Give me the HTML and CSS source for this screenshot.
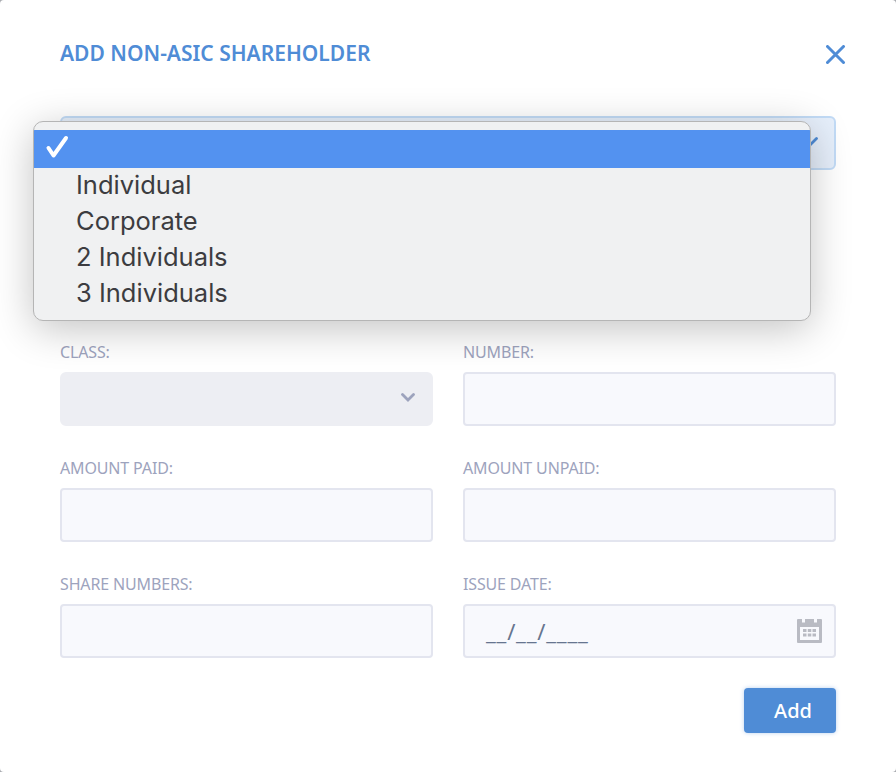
FILE: index.html
```html
<!DOCTYPE html>
<html lang="en">
<head>
<meta charset="utf-8">
<title>Add non-ASIC shareholder</title>
<link rel="stylesheet" href="styles.css">
</head>
<body>
<main class="modal">
  <header class="modal-head">
    <h1 class="modal-title">ADD NON-ASIC SHAREHOLDER</h1>
    <button class="close" type="button" aria-label="Close">
      <svg viewBox="0 0 20 20" width="20" height="20"><path d="M1.500 1.500 17.500 17.500M17.500 1.500 1.500 17.500" fill="none" stroke="#4f8cd6" stroke-width="3" stroke-linecap="round"/></svg>
    </button>
  </header>
  <div class="control select focus">
    <svg class="chev" viewBox="0 0 14 9" width="14" height="9"><path d="M1.500 1.500 7 7 12.500 1.500" fill="none" stroke="#4f8cd6" stroke-width="2.800" stroke-linecap="round"/></svg>
  </div>
  <form class="grid">
    <div class="field"><label class="label">CLASS:</label><div class="control select disabled"><svg class="chev" viewBox="0 0 14 9" width="14" height="9"><path d="M1.500 1.500 7 7 12.500 1.500" fill="none" stroke="#9da3bd" stroke-width="2.800" stroke-linecap="round"/></svg></div></div>
    <div class="field"><label class="label">NUMBER:</label><div class="control"></div></div>
    <div class="field"><label class="label">AMOUNT PAID:</label><div class="control"></div></div>
    <div class="field"><label class="label">AMOUNT UNPAID:</label><div class="control"></div></div>
    <div class="field"><label class="label">SHARE NUMBERS:</label><div class="control"></div></div>
    <div class="field"><label class="label">ISSUE DATE:</label><div class="control date"><span class="mask">__/__/____</span>
      <svg class="cal" viewBox="0 0 25 25" width="25" height="25"><path fill="#b9bbc3" fill-rule="evenodd" d="M1 1h4v3.500h3V1h9v3.500h3V1h4a1 1 0 0 1 1 1v22a1 1 0 0 1-1 1H1a1 1 0 0 1-1-1V2a1 1 0 0 1 1-1ZM3 9v13h19V9Z"/><path fill="#b9bbc3" d="M6 11h3.500v3H6ZM10.800 11h3.500v3h-3.500ZM15.500 11h3.500v3h-3.500ZM6 15.500h3.500v3H6ZM10.800 15.500h3.500v3h-3.500ZM15.500 15.500h3.500v3h-3.500Z"/></svg>
    </div></div>
  </form>
  <div class="actions"><button class="add" type="button">Add</button></div>
  <ul class="menu">
    <li class="opt selected"><svg class="tick" viewBox="0 0 24 24" width="24" height="24"><path d="M3.500 13 8.500 20.500 21 3" fill="none" stroke="#fff" stroke-width="4" stroke-linecap="round" stroke-linejoin="round"/></svg></li>
    <li class="opt">Individual</li>
    <li class="opt">Corporate</li>
    <li class="opt">2 Individuals</li>
    <li class="opt">3 Individuals</li>
  </ul>
</main>
</body>
</html>
```
FILE: styles.css
```css
html, body { margin: 0; height: 100%; }
body { background: #a9abb0; overflow: hidden; }
.modal {
  position: relative;
  box-sizing: border-box;
  height: 772px;
  padding: 41px 60px 0;
  background: #fff;
  border-radius: 4px;
  font-family: "Noto Sans", sans-serif;
}
.modal-head { display: flex; justify-content: space-between; align-items: center; height: 24px; margin-bottom: 51px; }
.modal-title { margin: 0; font-size: 21px; font-weight: 600; line-height: 24px; color: #4f8cd6; }
.close { display: flex; padding: 0; margin: 4px -10px 0 0; border: 0; background: none; }
.control {
  position: relative;
  box-sizing: border-box;
  height: 54px;
  border: 2px solid #e3e5ef;
  border-radius: 4px;
  background: #f8f9fd;
}
.select { border-radius: 6px; }
.focus { background: #e6effb; border-color: #c2dbf6; }
.disabled { background: #edeef3; border-color: #edeef3; }
.chev { position: absolute; right: 16px; top: 19px; }
.grid { display: grid; grid-template-columns: 373px 373px; column-gap: 30px; row-gap: 33px; margin-top: 173px; }
.field { display: flex; flex-direction: column; }
.label { height: 19px; margin-bottom: 10px; font-size: 16px; line-height: 19px; letter-spacing: -.15px; color: #9da3bd; }
.date { display: flex; align-items: center; justify-content: space-between; padding: 0 12px 0 21px; }
.mask { font-size: 22px; line-height: 30px; letter-spacing: .8px; color: #66758f; }
.cal { margin-bottom: 2px; }
.actions { display: flex; justify-content: flex-end; margin-top: 30px; }
.add {
  width: 92px;
  height: 45px;
  padding: 0 0 0 6px;
  border: 0;
  border-radius: 4px;
  background: #4f8cd6;
  box-shadow: 0 0 4px rgba(79,140,214,.4);
  color: #fff;
  font: 500 20px/45px "Noto Sans", sans-serif;
}
.menu {
  position: absolute;
  left: 33px;
  top: 121px;
  box-sizing: border-box;
  width: 778px;
  height: 200px;
  margin: 0;
  padding: 8px 0 0;
  list-style: none;
  overflow: hidden;
  border: 1px solid #b5b5b5;
  border-radius: 10px;
  background: #f0f1f2;
  box-shadow: 0 8px 40px rgba(0,0,0,.24);
  font-family: Inter, sans-serif;
  font-size: 25.500px;
  color: #3c3c40;
}
.opt { height: 36px; line-height: 34px; padding-left: 42px; }
.selected { display: flex; align-items: center; height: 38px; padding-left: 11px; background: #5392f0; }
.tick { margin-bottom: 4px; }
```
